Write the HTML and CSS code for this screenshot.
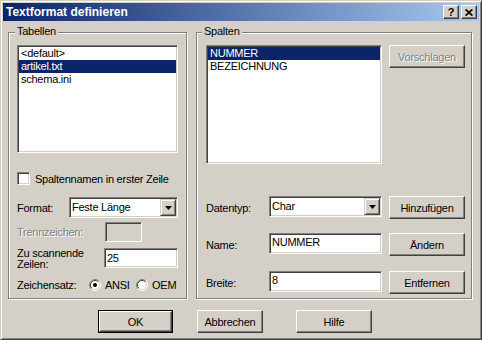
FILE: index.html
```html
<!DOCTYPE html>
<html>
<head>
<meta charset="utf-8">
<link rel="stylesheet" href="styles.css">
</head>
<body>
<div class="window">
  <div class="titlebar">
    <span class="title">Textformat definieren</span>
    <div class="tb-buttons">
      <div class="tb-btn"><span class="q">?</span></div>
      <div class="tb-btn"><svg width="8" height="7" viewBox="0 0 8 7"><path d="M0.6 0.4 L7.4 6.6 M7.4 0.4 L0.6 6.6" stroke="#000" stroke-width="1.7" fill="none"/></svg></div>
    </div>
  </div>
  <div class="groups">
    <div class="group group-left">
      <span class="legend legend-left">Tabellen</span>
      <div class="listbox list-tables">
        <div class="item">&lt;default&gt;</div>
        <div class="item selected">artikel.txt</div>
        <div class="item">schema.ini</div>
      </div>
      <div class="check-row">
        <span class="checkbox"></span>
        <span class="check-label">Spaltennamen in erster Zeile</span>
      </div>
      <div class="row row-format">
        <span class="lbl lbl-format">Format:</span>
        <div class="combo combo-format">
          <span class="combo-text">Feste Länge</span>
          <span class="combo-btn"><svg width="7" height="4" viewBox="0 0 7 4"><path d="M0 0 H7 L3.5 4 Z" fill="#000"/></svg></span>
        </div>
      </div>
      <div class="row row-sep">
        <span class="lbl lbl-sep disabled">Trennzeichen:</span>
        <div class="edit edit-sep"></div>
      </div>
      <div class="row row-scan">
        <span class="lbl lbl-scan">Zu scannende<br>Zeilen:</span>
        <div class="edit edit-scan">25</div>
      </div>
      <div class="row row-charset">
        <span class="lbl lbl-charset">Zeichensatz:</span>
        <svg class="radio" width="12" height="12" viewBox="0 0 12 12">
          <circle cx="6" cy="6" r="5" fill="#fff"/>
          <path d="M2.11 9.89 A5.5 5.5 0 0 1 9.89 2.11" stroke="#808080" fill="none"/>
          <path d="M9.89 2.11 A5.5 5.5 0 0 1 2.11 9.89" stroke="#fff" fill="none"/>
          <path d="M2.82 9.18 A4.5 4.5 0 0 1 9.18 2.82" stroke="#404040" fill="none"/>
          <path d="M9.18 2.82 A4.5 4.5 0 0 1 2.82 9.18" stroke="#d4d0c8" fill="none"/>
          <circle cx="6" cy="6" r="2" fill="#000"/>
        </svg>
        <span class="radio-label radio-ansi">ANSI</span>
        <svg class="radio" width="12" height="12" viewBox="0 0 12 12">
          <circle cx="6" cy="6" r="5" fill="#fff"/>
          <path d="M2.11 9.89 A5.5 5.5 0 0 1 9.89 2.11" stroke="#808080" fill="none"/>
          <path d="M9.89 2.11 A5.5 5.5 0 0 1 2.11 9.89" stroke="#fff" fill="none"/>
          <path d="M2.82 9.18 A4.5 4.5 0 0 1 9.18 2.82" stroke="#404040" fill="none"/>
          <path d="M9.18 2.82 A4.5 4.5 0 0 1 2.82 9.18" stroke="#d4d0c8" fill="none"/>
        </svg>
        <span class="radio-label">OEM</span>
      </div>
    </div>
    <div class="group group-right">
      <span class="legend legend-right">Spalten</span>
      <div class="rrow rrow-top">
        <div class="listbox list-cols">
          <div class="item selected">NUMMER</div>
          <div class="item">BEZEICHNUNG</div>
        </div>
        <div class="btn btn-side disabled">Vorschlagen</div>
      </div>
      <div class="rrow rrow-type">
        <span class="rlbl">Datentyp:</span>
        <div class="combo combo-type">
          <span class="combo-text">Char</span>
          <span class="combo-btn"><svg width="7" height="4" viewBox="0 0 7 4"><path d="M0 0 H7 L3.5 4 Z" fill="#000"/></svg></span>
        </div>
        <div class="btn btn-side">Hinzufügen</div>
      </div>
      <div class="rrow rrow-name">
        <span class="rlbl">Name:</span>
        <div class="edit edit-right">NUMMER</div>
        <div class="btn btn-side">Ändern</div>
      </div>
      <div class="rrow rrow-width">
        <span class="rlbl">Breite:</span>
        <div class="edit edit-right">8</div>
        <div class="btn btn-side">Entfernen</div>
      </div>
    </div>
  </div>
  <div class="dialog-buttons">
    <div class="btn-default"><div class="btn btn-inner">OK</div></div>
    <div class="btn btn-cancel">Abbrechen</div>
    <div class="btn btn-help">Hilfe</div>
  </div>
</div>
</body>
</html>
```
FILE: styles.css
```css
html, body {
  margin: 0;
  padding: 0;
  background: #d4d0c8;
}
body {
  font-family: "Liberation Sans", Arial, sans-serif;
  font-size: 11px;
  letter-spacing: -0.25px;
  color: #000;
}
.window {
  width: 482px;
  height: 340px;
  box-sizing: border-box;
  background: #d4d0c8;
  border: 1px solid;
  border-color: #d4d0c8 #404040 #404040 #d4d0c8;
  box-shadow: inset 1px 1px #fff, inset -1px -1px #808080;
  padding: 2px;
}
.titlebar {
  height: 18px;
  background: linear-gradient(to right, #0a246a, #a6caf0);
  display: flex;
  align-items: center;
  justify-content: space-between;
  padding: 0 2px 0 3px;
}
.title {
  color: #fff;
  font-weight: bold;
  font-size: 12px;
  letter-spacing: 0;
}
.tb-buttons {
  display: flex;
  gap: 2px;
}
.tb-btn {
  width: 16px;
  height: 14px;
  box-sizing: border-box;
  background: #d4d0c8;
  border: 1px solid;
  border-color: #fff #404040 #404040 #fff;
  box-shadow: inset -1px -1px #808080;
  display: flex;
  align-items: center;
  justify-content: center;
}
.q {
  font-weight: bold;
  font-size: 11px;
  line-height: 11px;
  letter-spacing: 0;
}
.groups {
  display: flex;
  margin-top: 11px;
  padding-left: 5px;
}
.group {
  position: relative;
  box-sizing: border-box;
  height: 267px;
  border: 1px solid #808080;
  box-shadow: inset 1px 1px #fff, 1px 1px #fff;
}
.group-left { width: 179px; }
.group-right { width: 276px; margin-left: 9px; }
.legend {
  position: absolute;
  top: -8px;
  line-height: 13px;
  padding: 0 2px;
  background: #d4d0c8;
}
.legend-left { left: 6px; }
.legend-right { left: 5px; }

.listbox {
  box-sizing: border-box;
  background: #fff;
  border: 1px solid;
  border-color: #808080 #fff #fff #808080;
  box-shadow: inset 1px 1px #404040, inset -1px -1px #d4d0c8;
  padding: 1px;
}
.list-tables {
  margin: 12px 0 0 8px;
  width: 161px;
  height: 108px;
}
.item {
  height: 13px;
  line-height: 13px;
  padding-left: 2px;
  white-space: nowrap;
}
.item.selected {
  background: #0a246a;
  color: #fff;
}
.check-row {
  display: flex;
  align-items: center;
  margin-top: 19px;
  padding-left: 8px;
  height: 13px;
}
.checkbox {
  width: 13px;
  height: 13px;
  box-sizing: border-box;
  background: #fff;
  border: 1px solid;
  border-color: #808080 #fff #fff #808080;
  box-shadow: inset 1px 1px #404040, inset -1px -1px #d4d0c8;
}
.check-label { margin-left: 5px; }

.row {
  display: flex;
  padding-left: 8px;
}
.row-format { margin-top: 12px; align-items: center; height: 21px; }
.lbl-format { width: 52px; }
.combo {
  box-sizing: border-box;
  height: 21px;
  background: #fff;
  border: 1px solid;
  border-color: #808080 #fff #fff #808080;
  box-shadow: inset 1px 1px #404040, inset -1px -1px #d4d0c8;
  padding: 1px;
  display: flex;
}
.combo-format { width: 109px; }
.combo-text {
  flex: 1;
  line-height: 17px;
  padding-left: 1px;
  white-space: nowrap;
}
.combo-btn {
  width: 16px;
  height: 17px;
  box-sizing: border-box;
  background: #d4d0c8;
  border: 1px solid;
  border-color: #d4d0c8 #404040 #404040 #d4d0c8;
  box-shadow: inset 1px 1px #fff, inset -1px -1px #808080;
  display: flex;
  align-items: center;
  justify-content: center;
}
.disabled {
  color: #808080;
  text-shadow: 1px 1px 0 #fff;
}
.row-sep { margin-top: 4px; align-items: center; height: 20px; }
.lbl-sep { width: 88px; }
.edit {
  box-sizing: border-box;
  background: #fff;
  border: 1px solid;
  border-color: #808080 #fff #fff #808080;
  box-shadow: inset 1px 1px #404040, inset -1px -1px #d4d0c8;
  padding: 1px 2px;
  line-height: 13px;
  white-space: nowrap;
}
.edit-sep {
  width: 37px;
  height: 20px;
  background: #d4d0c8;
}
.row-scan { margin-top: 6px; align-items: flex-start; }
.lbl-scan { width: 87px; line-height: 11px; }
.edit-scan {
  width: 74px;
  height: 20px;
  padding-top: 3px;
}
.row-charset { margin-top: 9px; align-items: center; height: 12px; }
.lbl-charset { width: 72px; }
.radio { display: block; }
.radio-label { margin-left: 4px; }
.radio-ansi { width: 31px; }

.rrow {
  display: flex;
  padding-left: 9px;
  align-items: flex-start;
}
.rrow-top { margin-top: 12px; }
.list-cols {
  width: 176px;
  height: 119px;
}
.btn {
  box-sizing: border-box;
  height: 23px;
  background: #d4d0c8;
  border: 1px solid;
  border-color: #fff #404040 #404040 #fff;
  box-shadow: inset -1px -1px #808080;
  display: flex;
  align-items: center;
  justify-content: center;
  white-space: nowrap;
}
.btn-side {
  width: 76px;
  margin-left: 7px;
}
.rlbl {
  width: 63px;
  align-self: center;
}
.rrow-type { margin-top: 32px; height: 23px; }
.combo-type { width: 113px; }
.rrow-name { margin-top: 14px; height: 23px; }
.rrow-width { margin-top: 15px; height: 23px; }
.edit-right {
  width: 113px;
  height: 21px;
  padding-top: 2px;
}
.dialog-buttons {
  display: flex;
  margin-top: 11px;
  padding-left: 95px;
}
.btn-default {
  width: 75px;
  height: 23px;
  box-sizing: border-box;
  border: 1px solid #000;
}
.btn-inner {
  height: 21px;
}
.btn-cancel {
  width: 66px;
  margin-left: 24px;
}
.btn-help {
  width: 76px;
  margin-left: 33px;
}
```
